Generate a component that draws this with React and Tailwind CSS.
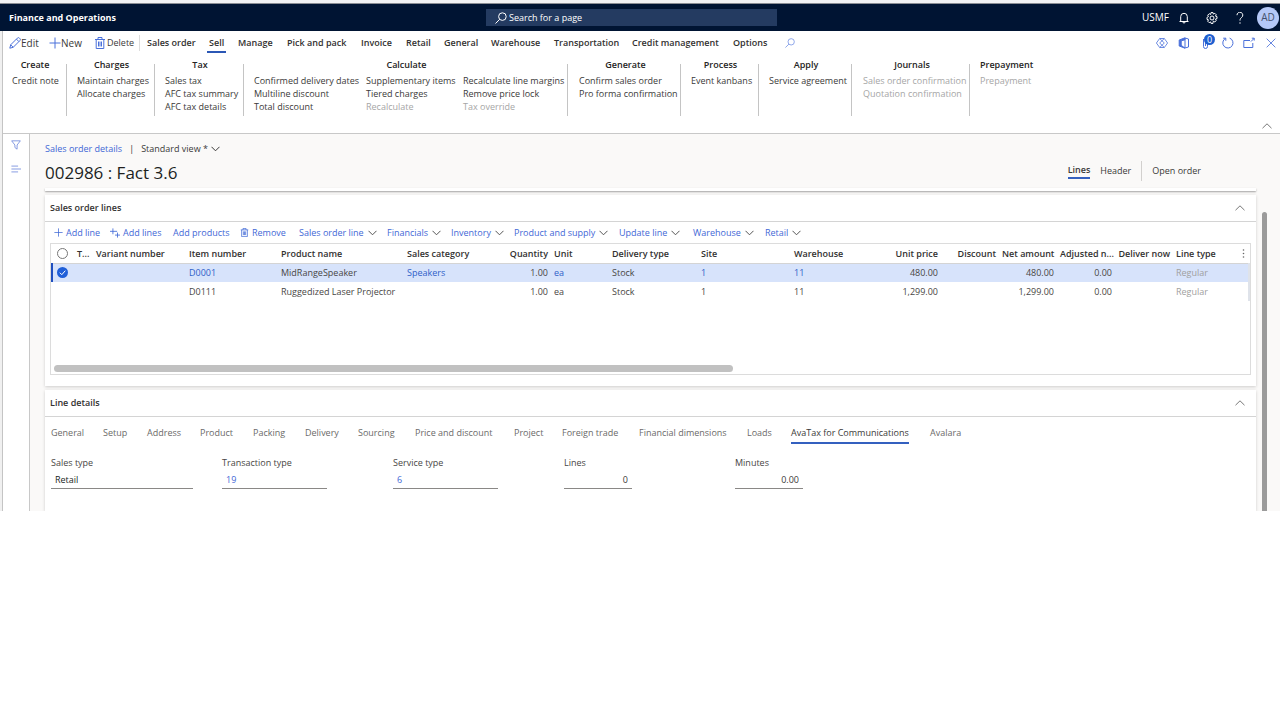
const menu = [
    { label: "Sales order", width: "w-[62px]" },
    { label: "Sell", width: "w-[29px]", active: true },
    { label: "Manage", width: "w-[49px]" },
    { label: "Pick and pack", width: "w-[74px]" },
    { label: "Invoice", width: "w-[45px]" },
    { label: "Retail", width: "w-[38px]" },
    { label: "General", width: "w-[47px]" },
    { label: "Warehouse", width: "w-[63px]" },
    { label: "Transportation", width: "w-[78px]" },
    { label: "Credit management", width: "w-[101px]" },
    { label: "Options", width: "w-[52px]" },
];

const groups = [
    { title: "Create", width: "w-[64px] pl-[9px]", columns: [{ items: ["Credit note"] }] },
    { title: "Charges", width: "w-[88px] pl-[10px]", columns: [{ items: ["Maintain charges", "Allocate charges"] }] },
    { title: "Tax", width: "w-[89px] pl-[10px]", columns: [{ items: ["Sales tax", "AFC tax summary", "AFC tax details"] }] },
    {
        title: "Calculate",
        width: "w-[324px] pl-[10px]",
        columns: [
            { width: "w-[112px]", items: ["Confirmed delivery dates", "Multiline discount", "Total discount"] },
            { width: "w-[97px]", items: ["Supplementary items", "Tiered charges", "Recalculate"] },
            { items: ["Recalculate line margins", "Remove price lock", "Tax override"] },
        ],
    },
    { title: "Generate", width: "w-[113px] pl-[11px]", columns: [{ items: ["Confirm sales order", "Pro forma confirmation"] }] },
    { title: "Process", width: "w-[78px] pl-[10px]", columns: [{ items: ["Event kanbans"] }] },
    { title: "Apply", width: "w-[93px] pl-[10px]", columns: [{ items: ["Service agreement"] }] },
    { title: "Journals", width: "w-[118px] pl-[11px]", columns: [{ items: ["Sales order confirmation", "Quotation confirmation"] }] },
    { title: "Prepayment", width: "w-[63px] pl-[10px]", columns: [{ items: ["Prepayment"] }] },
];

const disabledItems = ["Recalculate", "Tax override", "Sales order confirmation", "Quotation confirmation", "Prepayment"];

const lineMenus = [
    { label: "Sales order line", width: "w-[88px]" },
    { label: "Financials", width: "w-[64px]" },
    { label: "Inventory", width: "w-[63px]" },
    { label: "Product and supply", width: "w-[105px]" },
    { label: "Update line", width: "w-[74px]" },
    { label: "Warehouse", width: "w-[72px]" },
    { label: "Retail", width: "w-[40px]" },
];

const columns = [
    { label: "T...", width: "w-[19px]" },
    { label: "Variant number", width: "w-[93px]" },
    { label: "Item number", width: "w-[92px]", key: "item", link: true },
    { label: "Product name", width: "w-[126px]", key: "name" },
    { label: "Sales category", width: "w-[101px]", key: "category", link: true },
    { label: "Quantity", width: "w-[46px]", key: "quantity", right: true },
    { label: "Unit", width: "w-[58px]", key: "unit", link: true },
    { label: "Delivery type", width: "w-[89px]", key: "delivery" },
    { label: "Site", width: "w-[93px]", key: "site", link: true },
    { label: "Warehouse", width: "w-[99px]", key: "warehouse", link: true },
    { label: "Unit price", width: "w-[51px]", key: "price", right: true },
    { label: "Discount", width: "w-[58px]", right: true },
    { label: "Net amount", width: "w-[58px]", key: "net", right: true },
    { label: "Adjusted n...", width: "w-[58px]", key: "adjusted", right: true },
    { label: "Deliver now", width: "w-[58px]", right: true },
    { label: "Line type", width: "w-[62px]", key: "type", muted: true },
];

const rows = [
    { selected: true, item: "D0001", name: "MidRangeSpeaker", category: "Speakers", quantity: "1.00", unit: "ea", delivery: "Stock", site: "1", warehouse: "11", price: "480.00", net: "480.00", adjusted: "0.00", type: "Regular" },
    { item: "D0111", name: "Ruggedized Laser Projector", quantity: "1.00", unit: "ea", delivery: "Stock", site: "1", warehouse: "11", price: "1,299.00", net: "1,299.00", adjusted: "0.00", type: "Regular" },
];

const detailTabs = [
    { label: "General", width: "w-[52px]" },
    { label: "Setup", width: "w-[44px]" },
    { label: "Address", width: "w-[53px]" },
    { label: "Product", width: "w-[53px]" },
    { label: "Packing", width: "w-[52px]" },
    { label: "Delivery", width: "w-[53px]" },
    { label: "Sourcing", width: "w-[57px]" },
    { label: "Price and discount", width: "w-[99px]" },
    { label: "Project", width: "w-[48px]" },
    { label: "Foreign trade", width: "w-[77px]" },
    { label: "Financial dimensions", width: "w-[108px]" },
    { label: "Loads", width: "w-[44px]" },
    { label: "AvaTax for Communications", width: "w-[139px]", active: true },
    { label: "Avalara", width: "w-[40px]" },
];

const fields = [
    { id: "sales-type", label: "Sales type", value: "Retail", style: "w-[142px] px-1 text-[#201f1e]" },
    { id: "transaction-type", label: "Transaction type", value: "19", style: "w-[105px] px-1 text-[#3f68d6]" },
    { id: "service-type", label: "Service type", value: "6", style: "w-[105px] px-1 text-[#3f68d6]" },
    { id: "lines", label: "Lines", value: "0", style: "w-[68px] px-1 text-right text-[#3b3a39]" },
    { id: "minutes", label: "Minutes", value: "0.00", style: "w-[68px] px-1 text-right text-[#3b3a39]" },
];

function Icon({ size = "size-3", viewBox = "0 0 12 12", width = 1, children }) {
    return (
        <svg className={`${size} shrink-0`} viewBox={viewBox} fill="none" stroke="currentColor" strokeWidth={width} aria-hidden="true">
            {children}
        </svg>
    );
}

function Pencil() {
    return (
        <Icon>
            <path d="M.8 11.2l.9-3.4L8.4 1.1a1.4 1.4 0 0 1 2 0l.5.5a1.4 1.4 0 0 1 0 2L4.2 10.3zM7.4 2.1l2.5 2.5M1.7 7.8l2.5 2.5" />
        </Icon>
    );
}

function Plus({ size }) {
    return (
        <Icon size={size}>
            <path d="M6 .5v11M.5 6h11" />
        </Icon>
    );
}

function Trash({ size }) {
    return (
        <Icon size={size}>
            <path d="M1 2.5h10M4 2.5v-2h4v2M2.2 2.5v9h7.6v-9M4.5 4.5v5M6 4.5v5M7.5 4.5v5" />
        </Icon>
    );
}

function AddLines() {
    return (
        <Icon size="size-[10px]">
            <path d="M3.500.5v7M0 4h8.500M9 5.500v6M6 8.500h6" />
        </Icon>
    );
}

function Search({ size }) {
    return (
        <Icon size={size}>
            <circle cx="7.4" cy="4.6" r="3.8" />
            <path d="M4.7 7.3L.5 11.5" />
        </Icon>
    );
}

function ChevronDown() {
    return (
        <Icon size="h-[6px] w-[9px]" viewBox="0 0 9 6">
            <path d="M.5 .8l4 4 4-4" />
        </Icon>
    );
}

function ChevronUp() {
    return (
        <Icon size="h-[6px] w-[10px]" viewBox="0 0 10 6">
            <path d="M.5 5.2L5 .8l4.5 4.4" />
        </Icon>
    );
}

function TopBar() {
    return (
        <header className="flex h-7 items-center border-t border-[#8a8d94] bg-[#001433] text-white">
            <h1 className="flex-1 pl-[9px] text-[9px] font-bold">Finance and Operations</h1>
            <label className="flex h-[17px] w-[291px] items-center gap-[2px] bg-[#243b61] pl-[9px]">
                <Search />
                <input type="search" aria-label="Search for a page" placeholder="Search for a page" className="min-w-0 flex-1 bg-transparent text-[9px] outline-none placeholder:text-white" />
            </label>
            <div className="flex w-[503px] items-center justify-end pr-px text-[10px]">
                <span className="mr-[9px]">USMF</span>
                <button aria-label="Notifications" className="mr-4">
                    <Icon>
                        <path d="M1.500 9.500h9M2.700 9.500V4.600a3.300 3.300 0 0 1 6.600 0v4.900M4.800 9.800a1.200 1.200 0 0 0 2.400 0" />
                    </Icon>
                </button>
                <button aria-label="Settings" className="mr-4">
                    <Icon>
                        <path d="M5 .6h2l.4 1.5 1.4-.8 1.5 1.5-.9 1.3 1.6.5v2l-1.6.5.9 1.4-1.5 1.4-1.4-.8L7 10.800v.6H5l-.4-1.500-1.400.8-1.500-1.500.8-1.400L1 7.400v-2l1.500-.9-.8-1.300 1.500-1.500 1.400.8z" />
                        <circle cx="6" cy="6" r="2" />
                    </Icon>
                </button>
                <button aria-label="Help" className="mr-[11px]">
                    <Icon>
                        <path d="M3 3.200a2.900 2.900 0 1 1 4.700 2.200C6.600 6.300 6 6.800 6 8.600M6 10.300v1.400" />
                    </Icon>
                </button>
                <button className="size-[22px] rounded-full bg-[#b4c8f8] text-[10px] text-[#44516e]">AD</button>
            </div>
        </header>
    );
}

function ActionBar() {
    return (
        <div className="flex h-6 items-center pl-[6px] text-[9px] text-[#323130]">
            <button className="flex w-10 items-center text-[10px] text-[#3b3a39]">
                <span className="text-[#4a70da]"><Pencil /></span>
                Edit
            </button>
            <button className="flex w-[45px] items-center text-[10px] text-[#3b3a39]">
                <span className="text-[#4a70da]"><Plus /></span>
                New
            </button>
            <button className="flex h-4 w-[46px] items-center gap-px border-r border-[#dddddd] text-[#3b3a39]">
                <span className="text-[#4a70da]"><Trash /></span>
                Delete
            </button>
            <nav className="flex pl-[7px] font-semibold">
                {menu.map((item) => (
                    <div key={item.label} className={`${item.width} shrink-0`}>
                        <button className={item.active ? "relative whitespace-nowrap after:absolute after:-inset-x-[2px] after:-bottom-[3px] after:h-[2px] after:bg-[#2b57b5]" : "whitespace-nowrap"}>
                            {item.label}
                        </button>
                    </div>
                ))}
            </nav>
            <button aria-label="Search actions" className="text-[#7a96e6]">
                <Search size="size-[10px]" />
            </button>
            <div className="ml-auto flex items-center pr-1 text-[#4a70da]">
                <button aria-label="Power Apps" className="mr-[10px]">
                    <Icon width={0.8}>
                        <path d="M3.700 1.500h4.600L11.600 6l-3.300 4.500H3.700L.4 6zM3.700 1.500l4.600 4.500-4.600 4.500M8.300 1.500L3.700 6l4.600 4.500" />
                    </Icon>
                </button>
                <button aria-label="Open in Microsoft Office" className="mr-3">
                    <Icon>
                        <path d="M7 1l3.500 1v8L7 11" />
                        <path d="M7 .8L1.200 3v6L7 11.200 3.200 8.300V3.800L7 2.800z" fill="currentColor" />
                        <path d="M7 1v10" />
                    </Icon>
                </button>
                <button aria-label="Attachments" className="relative mr-2">
                    <Icon>
                        <path d="M5.500 3v6.500a2 2 0 0 1-4 0V2M3.500 3v6" />
                    </Icon>
                    <span className="absolute -top-[3px] left-[2px] size-[11px] rounded-full bg-[#1f5fd0] text-center text-[9px] leading-[11px] text-white">0</span>
                </button>
                <button aria-label="Refresh" className="mr-[9px]">
                    <Icon>
                        <path d="M7.600 1.100a5.100 5.100 0 1 1-4.100.3M1.200 1.200h2.600v2.600" />
                    </Icon>
                </button>
                <button aria-label="Open in new window" className="mr-[11px]">
                    <Icon>
                        <path d="M7 3.500H.8v7h9V6M8 4.500l3.200-3.200M8.800 1.200h2.400v2.400" />
                    </Icon>
                </button>
                <button aria-label="Close">
                    <Icon size="size-[10px]">
                        <path d="M.8.8l10.400 10.400M11.200.8L.8 11.200" />
                    </Icon>
                </button>
            </div>
        </div>
    );
}

function Ribbon() {
    return (
        <div className="flex h-[79px] border-b border-[#c8c8c8] pt-[9px]">
            {groups.map((group) => (
                <section key={group.title} className={`${group.width} h-[52px] shrink-0 ${group.title === "Prepayment" ? "" : "border-r border-[#c4c4c4] pr-2"}`}>
                    <h2 className="-mt-[6px] text-center text-[9px] leading-[13px] font-semibold text-[#252423]">{group.title}</h2>
                    <div className="flex pt-[3px]">
                        {group.columns.map((column, index) => (
                            <div key={index} className={`${column.width ?? ""} flex shrink-0 flex-col items-start`}>
                                {column.items.map((item) => (
                                    <button key={item} disabled={disabledItems.includes(item)} className="text-[9px] leading-[13px] whitespace-nowrap text-[#3b3a39] disabled:text-[#a6a6a6]">
                                        {item}
                                    </button>
                                ))}
                            </div>
                        ))}
                    </div>
                </section>
            ))}
            <button aria-label="Collapse ribbon" className="mr-2 mb-1 ml-auto self-end text-[#777777]">
                <ChevronUp />
            </button>
        </div>
    );
}

function CardHeader({ title }) {
    return (
        <div className="flex h-[27px] items-center justify-between border-b border-[#d4d4d4] pr-[11px] pl-[5px] text-[#777777]">
            <h3 className="text-[9px] font-semibold text-[#323130]">{title}</h3>
            <button aria-label={`Collapse ${title}`}>
                <ChevronUp />
            </button>
        </div>
    );
}

function LinesTable() {
    return (
        <div className="mx-[5px] h-[132px] border border-[#dcdcdc]">
            <div className="h-[121px]">
                <table className="w-full table-fixed border-collapse text-[9px]">
                    <thead>
                        <tr className="h-[19px] border-b border-[#d4d4d4] text-left text-[#323130]">
                            <th className="w-[22px] p-0 pl-[5px]">
                                <input type="checkbox" aria-label="Select all lines" className="block size-[11px] appearance-none rounded-full border border-[#777777]" />
                            </th>
                            {columns.map((column) => (
                                <th key={column.label} className={`${column.width} p-0 px-[3px] font-semibold whitespace-nowrap ${column.right ? "text-right" : ""}`}>
                                    {column.label}
                                </th>
                            ))}
                            <th className="p-0">
                                <button aria-label="Grid options" className="block px-[7px] text-[#666666]">
                                    <svg className="h-[9px] w-[3px]" viewBox="0 0 3 9" fill="currentColor" aria-hidden="true">
                                        <circle cx="1.500" cy="1" r=".8" />
                                        <circle cx="1.500" cy="4.500" r=".8" />
                                        <circle cx="1.500" cy="8" r=".8" />
                                    </svg>
                                </button>
                            </th>
                        </tr>
                    </thead>
                    <tbody>
                        {rows.map((row) => (
                            <tr key={row.item} className={`h-[19px] text-[#484644] ${row.selected ? "bg-[#d7e3fb]" : ""}`}>
                                <td className={`p-0 ${row.selected ? "border-l-2 border-[#1f4fc0] pl-1" : ""}`}>
                                    {row.selected && (
                                        <span className="relative block size-[11px]">
                                            <input type="checkbox" defaultChecked aria-label={`Select line ${row.item}`} className="block size-[11px] appearance-none rounded-full bg-[#1f5fd8]" />
                                            <svg className="pointer-events-none absolute inset-0 size-[11px] text-white" viewBox="0 0 11 11" fill="none" stroke="currentColor" aria-hidden="true">
                                                <path d="M2.800 5.700l2 2 3.500-4" />
                                            </svg>
                                        </span>
                                    )}
                                </td>
                                {columns.map((column) => (
                                    <td key={column.label} className={`p-0 px-[3px] whitespace-nowrap ${column.right ? "text-right" : ""} ${column.muted ? "text-[#a0a0a0]" : ""}`}>
                                        {column.link && row.selected ? <a href="#line" className="text-[#2f5fc8]">{row[column.key]}</a> : row[column.key]}
                                    </td>
                                ))}
                                <td className="border-r-2 border-[#dfe3ea] p-0" />
                            </tr>
                        ))}
                    </tbody>
                </table>
            </div>
            <div className="ml-[3px] h-[7px] w-[679px] rounded-full bg-[#c1c1c1]" />
        </div>
    );
}

function SalesOrderLines() {
    return (
        <section className="bg-white pb-[11px] shadow-[0_1px_3px_rgba(0,0,0,0.18)]">
            <CardHeader title="Sales order lines" />
            <div className="flex h-[21px] items-center pl-[9px] text-[9px] whitespace-nowrap text-[#3f68d6]">
                <button className="flex w-14 items-center gap-[3px]"><Plus size="size-[9px]" />Add line</button>
                <button className="flex w-[63px] items-center gap-[3px]"><AddLines />Add lines</button>
                <button className="w-[67px] text-left">Add products</button>
                <button className="flex w-[59px] items-center gap-[3px]"><Trash size="size-[9px]" />Remove</button>
                {lineMenus.map((item) => (
                    <button key={item.label} className={`${item.width} flex shrink-0 items-center gap-1`}>
                        {item.label}
                        <span className="text-[#555555]"><ChevronDown /></span>
                    </button>
                ))}
            </div>
            <LinesTable />
        </section>
    );
}

function LineDetails() {
    return (
        <section className="bg-white pb-[22px] shadow-[0_1px_3px_rgba(0,0,0,0.18)]">
            <CardHeader title="Line details" />
            <nav className="flex pt-[7px] pl-[6px] text-[9px] leading-[18px] whitespace-nowrap text-[#6b6a69]">
                {detailTabs.map((tab) => (
                    <div key={tab.label} className={`${tab.width} shrink-0`}>
                        <button className={tab.active ? "border-b-2 border-[#3460bf] text-[#3b3a39]" : ""}>{tab.label}</button>
                    </div>
                ))}
            </nav>
            <div className="flex pt-[11px] pl-[6px]">
                {fields.map((field) => (
                    <div key={field.id} className="flex w-[171px] flex-col">
                        <label htmlFor={field.id} className="text-[9px] leading-4 font-medium text-[#484644]">{field.label}</label>
                        <input id={field.id} defaultValue={field.value} className={`${field.style} h-[18px] border-b border-[#8a8886] bg-transparent text-[9px] outline-none`} />
                    </div>
                ))}
            </div>
        </section>
    );
}

export default function App() {
    return (
        <div className="bg-white font-['Open_Sans','Noto_Sans',sans-serif]">
            <div className="h-[3px] bg-[#f1f2f4]" />
            <TopBar />
            <div className="border-l-2 border-[#f0f0f0]">
                <div className="border-l border-[#c4c4c4]">
                    <ActionBar />
                    <Ribbon />
                    <div className="flex">
                        <aside className="flex w-[27px] shrink-0 flex-col items-center gap-[14px] border-r border-[#c8c8c8] pt-[6px] text-[#7089dc]">
                            <button aria-label="Filter">
                                <Icon size="size-[10px]">
                                    <path d="M.8 1h10.400L7.300 6v5l-2.600-2V6z" />
                                </Icon>
                            </button>
                            <button aria-label="Related information">
                                <Icon size="size-[10px]">
                                    <path d="M.5 2.500h8M.5 6H12M.5 9.500h8" />
                                </Icon>
                            </button>
                        </aside>
                        <main className="min-w-0 flex-1 bg-[#faf9f8]">
                            <div className="flex h-[54px] justify-between pr-[79px] pl-[15px]">
                                <div>
                                    <div className="flex items-center gap-[7px] pt-2 text-[9px] leading-[14px] text-[#3b3a39]">
                                        <a href="#details" className="text-[#3f68d6]">Sales order details</a>
                                        <span>|</span>
                                        <button className="flex items-center gap-[3px]">Standard view *<ChevronDown /></button>
                                    </div>
                                    <h2 className="pt-[6px] text-[17px] leading-[22px] font-medium text-[#201f1e]">002986 : Fact 3.6</h2>
                                </div>
                                <div className="flex items-center gap-[10px] pt-5 text-[9px] text-[#3b3a39]">
                                    <button className="border-b-2 border-[#3460bf] leading-[14px] font-semibold">Lines</button>
                                    <button>Header</button>
                                    <span className="h-5 border-l border-[#d2d0ce] pl-[10px] leading-[19px]">Open order</span>
                                </div>
                            </div>
                            <div className="flex pl-[15px]">
                                <div className="flex min-w-0 flex-1 flex-col gap-1">
                                    <div className="h-[3px] bg-white shadow-[0_1px_2px_rgba(0,0,0,0.35)]" />
                                    <SalesOrderLines />
                                    <LineDetails />
                                </div>
                                <div className="mt-6 mr-[13px] ml-[6px] w-[5px] rounded-t-full bg-[#9b9b9b]" />
                            </div>
                        </main>
                    </div>
                </div>
            </div>
        </div>
    );
}
